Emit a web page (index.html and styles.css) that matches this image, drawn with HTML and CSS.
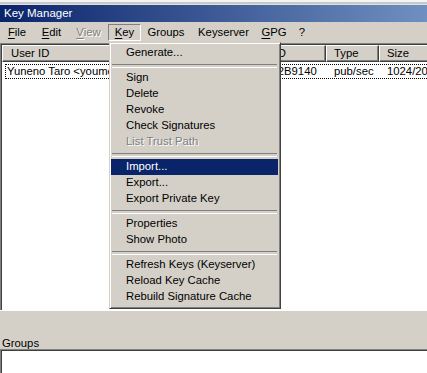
FILE: index.html
```html
<!DOCTYPE html>
<html>
<head>
<meta charset="utf-8">
<link rel="stylesheet" href="styles.css">
</head>
<body>
<div class="window">
  <div class="topstrip"></div>
  <div class="titlebar">Key Manager</div>
  <div class="menubar">
    <span class="mitem w-file"><u>F</u>ile</span>
    <span class="mitem w-edit"><u>E</u>dit</span>
    <span class="mitem w-view disabled"><u>V</u>iew</span>
    <span class="mitem w-key open"><u>K</u>ey</span>
    <span class="mitem w-groups">Groups</span>
    <span class="mitem w-ks">Keyserver</span>
    <span class="mitem w-gpg"><u>G</u>PG</span>
    <span class="mitem w-help">?</span>
  </div>
  <div class="listview">
    <div class="header">
      <div class="hcell c-uid">User ID</div>
      <div class="hcell c-valid">Valid</div>
      <div class="hcell c-kid">Key ID</div>
      <div class="hcell c-type">Type</div>
      <div class="hcell c-size">Size</div>
    </div>
    <div class="row focus">
      <div class="cell c-uid first">Yuneno Taro &lt;youmei@example.jp&gt;</div>
      <div class="cell c-valid">Full</div>
      <div class="cell c-kid">0x7A2B9140</div>
      <div class="cell c-type">pub/sec</div>
      <div class="cell c-size">1024/2048</div>
    </div>
  </div>
  <div class="lower">
    <div class="glabel">Groups</div>
    <div class="groupbox"></div>
  </div>

  <div class="popup">
    <div class="pitem">Generate...</div>
    <div class="sep"></div>
    <div class="pitem">Sign</div>
    <div class="pitem">Delete</div>
    <div class="pitem">Revoke</div>
    <div class="pitem">Check Signatures</div>
    <div class="pitem disabled">List Trust Path</div>
    <div class="sep"></div>
    <div class="pitem active">Import...</div>
    <div class="pitem">Export...</div>
    <div class="pitem">Export Private Key</div>
    <div class="sep"></div>
    <div class="pitem">Properties</div>
    <div class="pitem">Show Photo</div>
    <div class="sep"></div>
    <div class="pitem">Refresh Keys (Keyserver)</div>
    <div class="pitem">Reload Key Cache</div>
    <div class="pitem">Rebuild Signature Cache</div>
  </div>
</div>
</body>
</html>
```

FILE: styles.css
```css
* { box-sizing: border-box; }
html, body {
  margin: 0;
  padding: 0;
  width: 427px;
  height: 373px;
  overflow: hidden;
  background: #d4d0c8;
  font-family: "Liberation Sans", Arial, sans-serif;
  font-size: 11.3px;
  color: #000;
}
.window {
  position: relative;
  width: 427px;
  height: 373px;
  display: flex;
  flex-direction: column;
}
.topstrip {
  height: 5px;
  background: linear-gradient(#f4f4f4 0, #f4f4f4 2px, #c8c8c8 2px, #c8c8c8 4px, #e0e0e0 4px);
}
.titlebar {
  height: 17px;
  background: linear-gradient(90deg, #0a246a 0, #a6caf0 657px);
  background-size: 657px 100%;
  background-repeat: no-repeat;
  color: #fff;
  font-size: 11.5px;
  line-height: 17px;
  padding-left: 4px;
}
.menubar {
  height: 20px;
  display: flex;
  align-items: center;
}
.mitem {
  flex: none;
  text-align: center;
  height: 17px;
  line-height: 15px;
  border: 1px solid transparent;
  white-space: nowrap;
}
.w-file { width: 34px; }
.w-edit { width: 35px; }
.w-view { width: 39px; }
.w-key { width: 33px; }
.w-groups { width: 50px; }
.w-ks { width: 65px; }
.w-gpg { width: 36px; }
.w-help { width: 20px; }
.mitem u { text-decoration-thickness: 1px; text-underline-offset: 2px; }
.mitem.disabled { color: #808080; text-shadow: 1px 1px 0 #fff; }
.mitem.open {
  border-color: #808080 #fff #fff #808080;
}
.listview {
  height: 267px;
  margin-top: 1px;
  background: #fff;
  border-top: 1px solid #808080;
  border-left: 1px solid #808080;
  box-shadow: inset 1px 1px 0 #404040;
  padding: 1px 0 0 1px;
  overflow: hidden;
}
.header {
  display: flex;
  height: 17px;
}
.hcell {
  flex: none;
  background: #d4d0c8;
  border-top: 1px solid #fff;
  border-left: 1px solid #fff;
  border-right: 1px solid #404040;
  border-bottom: 1px solid #404040;
  box-shadow: inset -1px -1px 0 #808080;
  line-height: 15px;
  padding-left: 7px;
  white-space: nowrap;
  overflow: hidden;
}
.hcell.c-uid { padding-left: 8px; }
.c-uid { width: 150px; }
.c-valid { width: 92px; }
.c-kid { width: 82px; }
.c-type { width: 53px; }
.c-size { width: 80px; }
.row {
  display: flex;
  height: 15px;
  margin-top: 2px;
  margin-left: 3px;
  border: 1px dotted #000;
  width: 460px;
}
.cell {
  flex: none;
  line-height: 13px;
  padding-left: 7px;
  white-space: nowrap;
  overflow: hidden;
}
.cell.first { width: 147px; padding-left: 1px; }
.lower {
  flex: 1;
  display: flex;
  flex-direction: column;
  border-top: 1px solid #fff;
}
.glabel {
  margin-top: 27px;
  padding-left: 2px;
  height: 11px;
  line-height: 11px;
}
.groupbox {
  flex: 1;
  background: #fff;
  border-top: 1px solid #808080;
  border-left: 1px solid #808080;
  box-shadow: inset 1px 1px 0 #404040;
}
.popup {
  position: absolute;
  left: 109px;
  top: 42px;
  width: 172px;
  background: #d4d0c8;
  border-top: 1px solid #d4d0c8;
  border-left: 1px solid #d4d0c8;
  border-right: 1px solid #404040;
  border-bottom: 1px solid #404040;
  box-shadow: inset 1px 1px 0 #fff, inset -1px -1px 0 #808080;
  padding: 2px 2px 3px 1px;
}
.pitem {
  height: 16px;
  line-height: 15px;
  padding-left: 15px;
  white-space: nowrap;
}
.pitem.disabled { color: #808080; text-shadow: 1px 1px 0 #fff; }
.pitem.active { background: #0a246a; color: #fff; }
.sep {
  height: 9px;
  padding: 3px 1px 0 1px;
}
.sep::before {
  content: "";
  display: block;
  height: 2px;
  border-top: 1px solid #808080;
  border-bottom: 1px solid #fff;
}
```
